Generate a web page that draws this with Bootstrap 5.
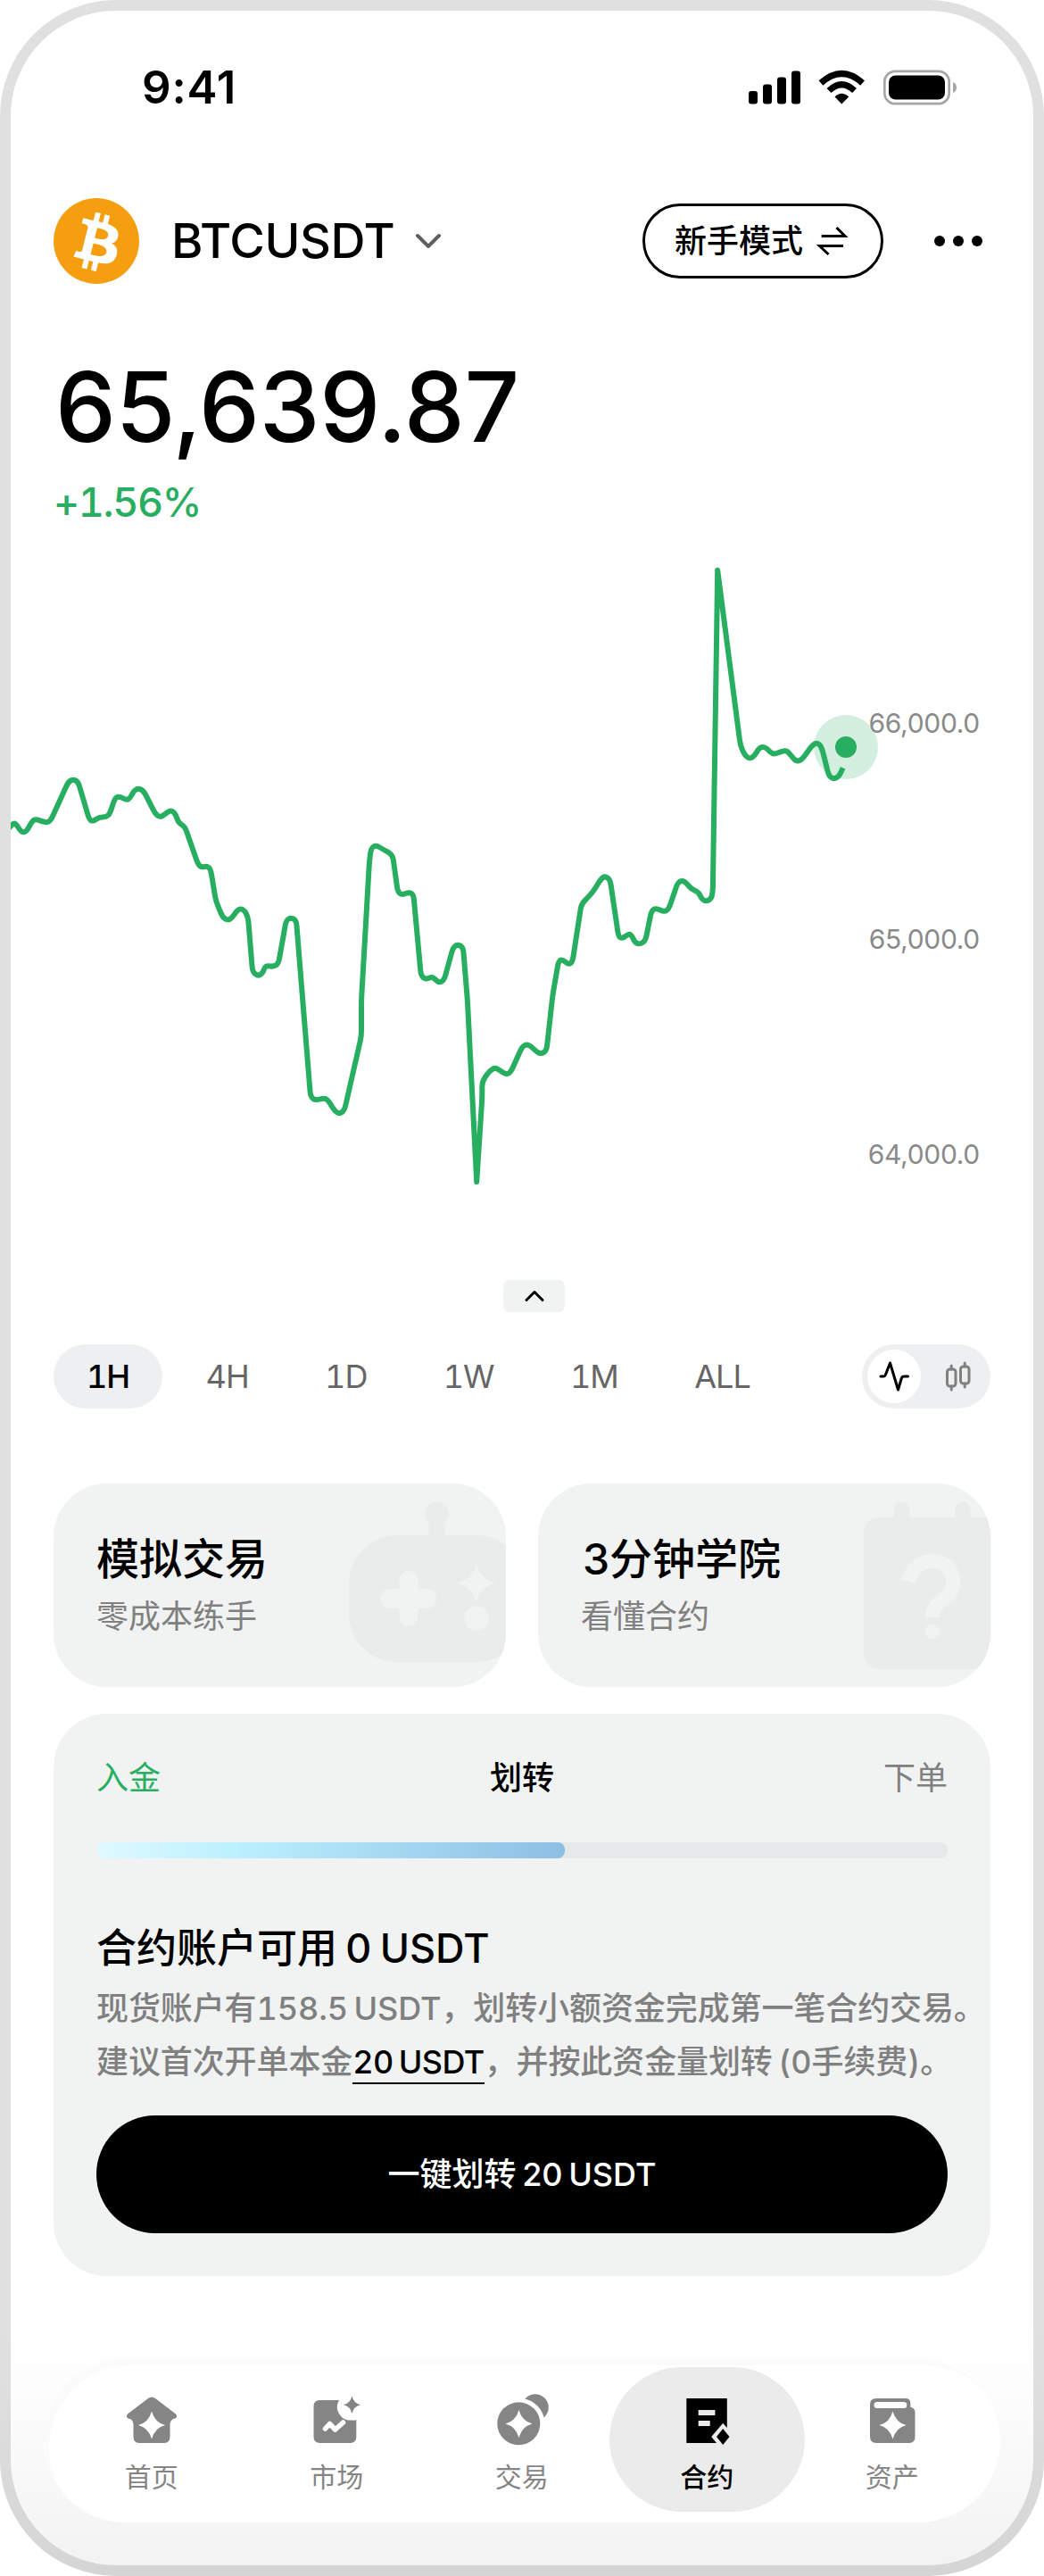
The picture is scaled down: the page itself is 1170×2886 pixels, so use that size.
<!DOCTYPE html>
<html lang="zh-CN">
<head>
  <meta charset="UTF-8" />
  <meta name="viewport" content="width=device-width, initial-scale=1" />
  <title>BTCUSDT 合约</title>
  <link href="https://cdn.jsdelivr.net/npm/bootstrap@5.3.3/dist/css/bootstrap.min.css" rel="stylesheet" />
<style>
    body {
        width: 1170px;
        background: #fff;
        color: #000;
        font-family: Inter, "Noto Sans CJK SC", sans-serif;
        font-size: 36px;
        line-height: 60px;
    }
    svg { display: block; }
    .fw-mid { font-weight: 500; }
    .phone {
        width: 1170px;
        height: 2886px;
        border: 12px solid #e0e0e0;
        border-radius: 130px;
        padding: 0 48px;
        background: #fff;
    }
    /* soft shade rising from the bottom edge, covers the frame too */
    .phone-shade {
        left: -12px;
        right: -12px;
        bottom: -12px;
        height: 300px;
        border-radius: 0 0 130px 130px;
        background: linear-gradient(rgba(0, 0, 0, 0), rgba(0, 0, 0, .008) 30%, rgba(0, 0, 0, .05));
    }
    .status-bar { height: 171px; padding: 0 36px 0 99px; }
    .status-time { font-size: 51px; font-weight: 600; letter-spacing: .8px; }
    .pair-bar { height: 96px; margin-top: 39px; }
    .pair-name { font-size: 54px; letter-spacing: -.4px; margin-left: 36px; }
    .mode-btn {
        width: 270px;
        height: 84px;
        border: 3px solid #000;
        padding: 0 33px;
        gap: 15px;
        margin-right: 57px;
    }
    .more-dots { margin-right: 9px; }
    .price { font-size: 108px; line-height: 120px; margin-top: 78px; padding-left: 2px; letter-spacing: -.3px; }
    .change { font-size: 45px; margin-top: 17px; color: #27ae60; font-variant-numeric: tabular-nums; letter-spacing: -1.4px; }
    .chart { width: 1146px; height: 841px; margin: 0 -48px; }
    .chart text { font-size: 30px; letter-spacing: -.3px; fill: #8a8a8a; }
    .collapse-btn {
        width: 69px;
        height: 36px;
        margin-left: 504px;
        border-radius: 7px;
        background: #f1f3f2;
    }
    .range-row { margin-top: 36px; height: 72px; }
    .range-list { gap: 11.4px; }
    .range-item { height: 72px; padding: 0 37px; color: #666; font-variant-numeric: tabular-nums; letter-spacing: -1px; }
    .range-item.active { background: #eeeff1; color: #000; font-weight: 500; }
    .type-switch { width: 144px; height: 72px; padding: 6px; background: #eeeff1; }
    .type-switch > span { width: 60px; height: 60px; }
    .tile-row { margin-top: 84px; gap: 36px; }
    .tile {
        height: 228px;
        border-radius: 60px;
        padding: 48px;
        background: #f1f3f2;
    }
    .tile-title { font-size: 48px; line-height: 73px; }
    .tile-title.with-digit { padding-left: 2px; }
    .tile-sub { line-height: 56px; color: #808080; }
    .tile-art { top: 0; right: 0; }
    .steps-card {
        margin-top: 30px;
        height: 630px;
        border-radius: 60px;
        padding: 42px 48px 0;
        background: #f1f3f2;
    }
    .track { height: 18px; margin-top: 42px; border-radius: 8px; background: #e6e9e9; }
    .track-fill { border-radius: 8px; background: linear-gradient(90deg, #e0f9ff, #baf0fe 31%, #8dbfe4); }
    .steps-title { font-size: 45px; margin-top: 71px; word-spacing: -2.7px; }
    .steps-text {
        color: #808080;
        margin-top: 7px;
        width: 1000px;
        word-spacing: -3px;
        letter-spacing: -.1px;
        font-variant-numeric: tabular-nums;
    }
    .amount { color: #000; border-bottom: 2px solid #000; padding-bottom: 1px; letter-spacing: -.6px; }
    .transfer-btn { height: 132px; margin-top: 30px; background: #000; color: #fff; word-spacing: -3px; }
    .tab-dock {
        height: 183px;
        margin: 93px -11px 0;
        padding: 9px 17px;
        border-radius: 92px;
        background: #fff;
        box-shadow: inset 6px 7px 0 #fbfbfb;
    }
    .tab-item {
        flex: 0 0 207.5px;
        height: 162px;
        padding-top: 30px;
        color: #858585;
        font-size: 30px;
        line-height: 44px;
    }
    .tab-item svg { margin-bottom: 11px; }
    .tab-item.active {
        flex-basis: 219.5px;
        margin: 0 -6px;
        border-radius: 81px;
        background: #ebebeb;
        color: #000;
        font-weight: 500;
    }
</style>
</head>
<body>

  <div class="phone position-relative">
    <div class="phone-shade position-absolute"></div>

    <!-- Status bar -->
    <div class="status-bar d-flex align-items-center justify-content-between">
      <span class="status-time">9:41</span>
      <svg width="236" height="40" viewBox="838 77.5 236 40">
        <rect x="839" y="101.5" width="10" height="14.5" rx="3" />
        <rect x="855" y="94" width="10" height="22" rx="3" />
        <rect x="871" y="86" width="10" height="30" rx="3" />
        <rect x="887" y="79" width="10" height="37" rx="3" />
        <g fill="none" stroke="#000">
          <path d="M920 92.5Q943.3 71.5 966.6 92.5" stroke-width="7.2" />
          <path d="M929 101Q943.3 87.5 957.6 101" stroke-width="7" />
        </g>
        <path d="M935.5 108Q943.3 100.5 951.2 108L943.3 116Z" />
        <rect x="991.3" y="79.3" width="72.4" height="36.4" rx="12" fill="none" stroke="#a6a6a6" stroke-width="2.7" />
        <rect x="996" y="84" width="63" height="27" rx="7.5" />
        <path d="M1068 91.5Q1072 93 1072 97.5T1068 103.5Z" fill="#a6a6a6" />
      </svg>
    </div>

    <!-- Pair header -->
    <div class="pair-bar d-flex align-items-center">
      <svg width="96" height="96" viewBox="0 0 32 32">
        <circle cx="16" cy="16" r="16" fill="#f59e0f" />
        <path transform="translate(-1.6 -1.45) scale(1.11)" fill="#fff" d="M23.189 14.02c.314-2.096-1.283-3.223-3.465-3.975l.708-2.84-1.728-.43-.69 2.765c-.454-.114-.92-.22-1.385-.326l.695-2.783L15.596 6l-.708 2.839c-.376-.086-.746-.17-1.104-.26l.002-.009-2.384-.595-.46 1.846s1.283.294 1.256.312c.7.175.826.638.805 1.006l-.806 3.235c.048.012.11.03.18.057l-.183-.045-1.13 4.532c-.086.212-.303.531-.793.41.018.025-1.256-.313-1.256-.313l-.858 1.978 2.25.561c.418.105.828.215 1.231.318l-.715 2.872 1.727.43.708-2.84c.472.127.93.245 1.378.357l-.706 2.828 1.728.43.715-2.866c2.948.558 5.164.333 6.097-2.333.752-2.146-.037-3.385-1.588-4.192 1.13-.26 1.98-1.003 2.207-2.538zm-3.95 5.538c-.533 2.147-4.148.986-5.32.695l.95-3.805c1.172.293 4.929.872 4.37 3.11zm.535-5.569c-.487 1.953-3.495.96-4.47.717l.86-3.45c.975.243 4.118.696 3.61 2.733z" />
      </svg>
      <span class="pair-name fw-mid">BTCUSDT</span>
      <svg class="ms-4" width="30" height="20" viewBox="1 0 30 20" fill="none" stroke="#606060" stroke-width="4" stroke-linecap="round" stroke-linejoin="round">
        <path d="M3 4L15 16L27 4" />
      </svg>
      <div class="mode-btn rounded-pill d-flex align-items-center fw-mid ms-auto text-nowrap">
        新手模式
        <svg width="36" height="34" viewBox="915 253 36 34" fill="none" stroke="#000" stroke-width="3">
          <path d="M920.7 264.5H947L937.5 255M945 275.5H918.5L928.5 285" />
        </svg>
      </div>
      <svg class="more-dots" width="54" height="12" viewBox="0 0 54 12">
        <circle cx="6" cy="6" r="6" /><circle cx="27" cy="6" r="6" /><circle cx="48" cy="6" r="6" />
      </svg>
    </div>

    <div class="price fw-mid">65,639.87</div>
    <div class="change fw-mid">+1.56%</div>

    <!-- Price line -->
    <svg class="chart" viewBox="12 593 1146 841">
      <circle cx="948" cy="837" r="36" fill="#27ae60" fill-opacity=".2" />
      <path id="price_line" fill="none" stroke="#27ae60" stroke-width="6" stroke-linejoin="round" />
      <circle cx="948" cy="837" r="12" fill="#27ae60" />
      <text x="1098" y="821" text-anchor="end">66,000.0</text>
      <text x="1098" y="1062.5" text-anchor="end">65,000.0</text>
      <text x="1098" y="1304" text-anchor="end">64,000.0</text>
    </svg>

    <div class="collapse-btn d-flex align-items-center justify-content-center">
      <svg width="24" height="16" viewBox="0 0 24 16" fill="none" stroke="#000" stroke-width="3" stroke-linecap="round" stroke-linejoin="round">
        <path d="M3 12.5L12 3.5L21 12.5" />
      </svg>
    </div>

    <!-- Time range -->
    <div class="range-row d-flex align-items-center">
      <div class="range-list d-flex">
        <div class="range-item active rounded-pill d-flex align-items-center">1H</div>
        <div class="range-item d-flex align-items-center">4H</div>
        <div class="range-item d-flex align-items-center">1D</div>
        <div class="range-item d-flex align-items-center">1W</div>
        <div class="range-item d-flex align-items-center">1M</div>
        <div class="range-item d-flex align-items-center">ALL</div>
      </div>
      <div class="type-switch rounded-pill d-flex justify-content-between ms-auto">
        <span class="bg-white rounded-circle d-flex align-items-center justify-content-center">
          <svg width="36" height="36" viewBox="984 1524 36 36" fill="none" stroke="#000" stroke-width="3" stroke-linecap="round" stroke-linejoin="round">
            <path d="M987 1542H990Q992 1542 992.5 1540L997.5 1527L1006.5 1557L1010.5 1543.5Q1011 1542 1013 1542H1017.5" />
          </svg>
        </span>
        <span class="d-flex align-items-center justify-content-center">
          <svg width="30" height="36" viewBox="1059.5 1524 30 36" fill="none" stroke="#808080" stroke-width="3" stroke-linecap="round">
            <rect x="1062" y="1534" width="9.5" height="19" rx="3" />
            <path d="M1066.7 1530V1534M1066.7 1553V1557" />
            <rect x="1077" y="1531" width="9.5" height="19" rx="3" />
            <path d="M1081.7 1527V1531M1081.7 1550V1554" />
          </svg>
        </span>
      </div>
    </div>

    <!-- Shortcuts -->
    <div class="tile-row d-flex">
      <div class="tile flex-fill w-50 position-relative overflow-hidden">
        <svg class="tile-art position-absolute" width="200" height="228" viewBox="367 1662 200 228">
          <g fill="#eaebeb">
            <rect x="391" y="1720" width="197" height="142" rx="54" />
            <path d="M480.5 1722V1706Q476 1701 476 1695.5A13.5 13.5 0 0 1 503 1695.5Q503 1701 498.5 1706V1722Z" />
          </g>
          <g fill="#f1f3f2">
            <rect x="427" y="1780.5" width="62" height="21" rx="9" />
            <rect x="447.5" y="1760" width="21" height="62" rx="10" />
            <path d="M534 1752.5Q538 1769 555.5 1773.5Q538 1778 534 1794.5Q530 1778 512.5 1773.5Q530 1769 534 1752.5Z" />
            <circle cx="534" cy="1813" r="13.7" />
          </g>
        </svg>
        <div class="tile-title fw-mid position-relative">模拟交易</div>
        <div class="tile-sub position-relative">零成本练手</div>
      </div>
      <div class="tile flex-fill w-50 position-relative overflow-hidden">
        <svg class="tile-art position-absolute" width="200" height="228" viewBox="910 1662 200 228">
          <g fill="#eaebeb">
            <rect x="967.7" y="1700" width="155" height="170" rx="17" />
            <rect x="1002" y="1682.5" width="17.5" height="30" rx="8.7" />
            <rect x="1070" y="1682.5" width="17.5" height="30" rx="8.7" />
          </g>
          <path d="M1018 1772C1022 1757 1032 1749 1045 1749C1060 1749 1068.5 1760 1068.5 1773C1068.5 1792 1045 1792 1045 1812" fill="none" stroke="#f1f3f2" stroke-width="16" />
          <circle cx="1045" cy="1828" r="8.3" fill="#f1f3f2" />
        </svg>
        <div class="tile-title with-digit fw-mid position-relative">3分钟学院</div>
        <div class="tile-sub position-relative">看懂合约</div>
      </div>
    </div>

    <!-- Onboarding steps -->
    <div class="steps-card">
      <div class="row g-0">
        <div class="col" style="color: #27ae60">入金</div>
        <div class="col text-center fw-mid">划转</div>
        <div class="col text-end" style="color: #808080">下单</div>
      </div>
      <div class="track">
        <div class="track-fill h-100" style="width: 55%"></div>
      </div>
      <div class="steps-title fw-mid">合约账户可用 0 USDT</div>
      <div class="steps-text fw-mid text-nowrap">
        现货账户有158.5 USDT，划转小额资金完成第一笔合约交易。<br />
        建议首次开单本金<span class="amount">20 USDT</span>，并按此资金量划转 (0手续费)。
      </div>
      <div class="transfer-btn rounded-pill d-flex align-items-center justify-content-center fw-mid">一键划转 20 USDT</div>
    </div>

    <!-- Bottom tabs -->
    <div class="tab-dock position-relative d-flex">
      <div class="tab-item d-flex flex-column align-items-center">
        <svg width="60" height="60" viewBox="0 0 60 60">
          <path fill="#858585" d="M26 5Q30 2 34 5L57 22.5Q59 25 57.5 26.5Q56 28 54 28Q50.5 30 50.5 35V48Q50.5 55 44 55H16Q9.5 55 9.5 48V35Q9.5 30 6 28Q4 28 2.5 26.5Q1 25 3 22.5Z" />
          <path fill="#fff" d="M30 19.5Q33.5 32 45 35Q33.5 38 30 50.5Q26.5 38 15 35Q26.5 32 30 19.5Z" />
        </svg>
        首页
      </div>
      <div class="tab-item d-flex flex-column align-items-center">
        <svg width="60" height="60" viewBox="0 0 60 60">
          <path fill="#858585" d="M11.5 7H33A15 15 0 0 0 47.5 29.5Q50 30 52.3 29V48Q52.3 55 45.5 55H11.5Q4.5 55 4.5 48V14Q4.5 7 11.5 7Z" />
          <path fill="#858585" d="M47.5 2.5Q49.5 10.5 57 12.3Q49.5 14 47.5 22Q45.5 14 38 12.3Q45.5 10.5 47.5 2.5Z" />
          <path d="M17.5 39L22.5 33.5L28.7 40L37.5 32" fill="none" stroke="#fff" stroke-width="5.5" stroke-linecap="round" stroke-linejoin="round" />
        </svg>
        市场
      </div>
      <div class="tab-item d-flex flex-column align-items-center">
        <svg width="60" height="60" viewBox="0 0 60 60">
          <path fill="#858585" d="M33.3 5.5A15 15 0 1 1 54.6 26.5A28.7 28.7 0 0 0 33.3 5.5Z" />
          <circle cx="26.3" cy="33.3" r="24" fill="#858585" />
          <path fill="#fff" d="M26.5 18Q30 30.5 41.5 33.5Q30 36.5 26.5 49Q23 36.5 11.5 33.5Q23 30.5 26.5 18Z" />
        </svg>
        交易
      </div>
      <div class="tab-item active d-flex flex-column align-items-center">
        <svg width="60" height="60" viewBox="0 0 60 60">
          <path d="M7.3 5H52.8V38L48.2 32.7L35.2 48L41 55H7.3Z" />
          <path d="M48.2 39L55.5 48L48.2 57L41 48Z" />
          <path fill="#ebebeb" d="M20.7 18H39.4V24H20.7ZM20.7 30H33.7V36H20.7Z" />
        </svg>
        合约
      </div>
      <div class="tab-item d-flex flex-column align-items-center">
        <svg width="60" height="60" viewBox="0 0 60 60">
          <path fill="#858585" d="M12 5H44.5Q50 5 50.3 10V14.7Q55.5 15.5 55.5 21V48Q55.5 55 49 55H12Q5 55 5 48V12Q5 5 12 5Z" />
          <rect x="9.5" y="9" width="36.8" height="7" rx="3.5" fill="#fff" />
          <path fill="#fff" d="M30.5 19.5Q34 32 45.5 35Q34 38 30.5 50.5Q27 38 15.5 35Q27 32 30.5 19.5Z" />
        </svg>
        资产
      </div>
    </div>
  </div>

  <!-- Bootstrap JS -->
  <script src="https://cdn.jsdelivr.net/npm/bootstrap@5.3.3/dist/js/bootstrap.bundle.min.js"></script>

  <!-- Draw the price line with softened corners -->
  <script>
    const points = [
      [9, 929], [15, 922], [18, 923], [23, 931], [26, 932.5], [30, 931], [36, 920], [40, 917.5], [52, 922], [57, 919],
      [76.5, 876], [82, 873], [87.6, 876], [100, 918], [104, 920.4], [111, 915.5], [118.6, 915.5], [123, 912],
      [128.6, 894.7], [133, 891.8], [142, 896.6], [146, 894], [150, 886], [155, 883], [161, 886], [174, 911.7],
      [179, 915.5], [184, 913], [191.3, 907.3], [196.7, 911.7], [200, 922], [207, 925.7], [222, 968.4], [226, 971.8],
      [232, 970.3], [236, 973.7], [242, 1009.6], [249.5, 1027.5], [255, 1031], [260, 1028.5], [265, 1020.7],
      [269.4, 1017.8], [274, 1020], [278, 1027.5], [283, 1088.6], [288.5, 1093.4], [294, 1091], [297, 1083], [300, 1082],
      [306, 1083], [312, 1080], [320.7, 1031], [326, 1028], [332, 1031], [348, 1228.6], [353.6, 1233], [363.5, 1230],
      [368, 1233], [375, 1244.6], [380.4, 1248], [386, 1244], [405, 1160.8], [405, 1121], [414, 964.5], [416, 950],
      [421.3, 947], [426.7, 950], [440, 957.7], [445.8, 999.4], [450.8, 1002.8], [458.4, 999.4], [463.4, 1002.3],
      [471.8, 1093], [477, 1097.3], [484, 1094.4], [487.5, 1097], [492.5, 1101.2], [497.8, 1097.8], [507.8, 1061.4],
      [513, 1058], [519, 1061.4], [523.9, 1121], [534.2, 1324], [540.3, 1230], [540.3, 1211.7], [548.7, 1199.6],
      [555, 1196], [560.6, 1199.6], [567.5, 1204], [572.5, 1201], [585, 1173], [590, 1170], [595, 1172], [602, 1179],
      [607, 1180.7], [612.5, 1176.8], [619.4, 1114.8], [625.9, 1077.4], [629.7, 1074.5], [637.3, 1080.8], [641.6, 1077.4],
      [651.5, 1013], [664.5, 999.4], [673.3, 984.9], [678, 981.5], [683.7, 985.3], [693.2, 1049.3], [697.4, 1051.7],
      [704.7, 1046], [708, 1048], [711.6, 1056.1], [717.3, 1058], [723.4, 1053.7], [730, 1020.7], [735, 1017.3],
      [744.5, 1021.7], [749.5, 1018.3], [759.4, 989.2], [764.4, 986.3], [769, 989], [774.7, 996], [783, 999.4], [786, 1007],
      [791.2, 1010], [797, 1007], [798.8, 999.4], [804.2, 638.8], [829.8, 835.6], [835.2, 847], [840.5, 850],
      [845.5, 847], [850, 839], [854, 836.5], [859, 838], [864, 843.5], [868, 845], [879.6, 840.4], [884, 843],
      [890, 851], [894, 853], [899, 850.5], [910.6, 834.6], [915.5, 832], [920.5, 836], [929, 869.5], [934.7, 873],
      [940.4, 869.5], [944.6, 860.3]
    ];

    let d = 'M' + points[0];
    for (let i = 1; i < points.length - 1; i++) {
      const [x, y] = points[i];
      const step = (px, py) => {
        const len = Math.hypot(px - x, py - y);
        // the two spikes stay sharp
        const r = (y > 1300 || y < 700) ? 0 : Math.min(6, len / 2) / len;
        return [x + (px - x) * r, y + (py - y) * r];
      };
      d += 'L' + step(...points[i - 1]) + 'Q' + [x, y] + ' ' + step(...points[i + 1]);
    }
    d += 'L' + points[points.length - 1];
    document.getElementById('price_line').setAttribute('d', d);
  </script>

</body>
</html>
